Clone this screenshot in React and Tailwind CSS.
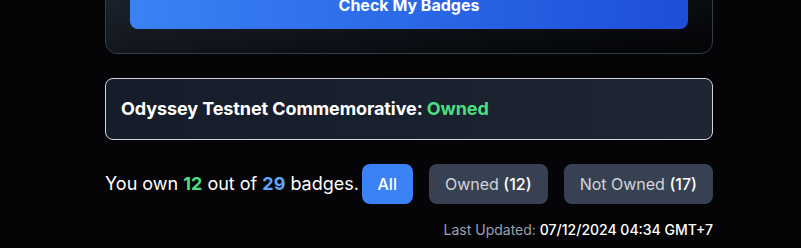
export default function App() {
  return (
    <div className="min-h-screen overflow-hidden bg-[#050507] font-['Inter','Liberation_Sans',sans-serif] text-white">
      <div className="ml-[105px] w-[608px] -mt-[44px]">
        <div className="rounded-xl border border-[#363c4a] bg-gradient-to-br from-[#232b38] via-[#12161e] to-[#030405] p-6">
          <button className="w-full rounded-lg bg-gradient-to-r from-[#3b82f6] to-[#1d4ed8] py-3 text-base font-bold text-white">
            Check My Badges
          </button>
        </div>

        <div className="mt-6 rounded-lg border border-[#d1d5db] bg-gradient-to-r from-[#161c29] to-[#1e2533] py-4 pl-[15px] pr-4">
          <p className="text-lg font-bold tracking-[-0.005em]">
            Odyssey Testnet Commemorative: <span className="text-[#4ade80]">Owned</span>
          </p>
        </div>

        <div className="mt-6 flex items-center justify-between">
          <p className="text-lg">
            You own <span className="font-bold text-[#4ade80]">12</span> out of{' '}
            <span className="font-bold text-[#60a5fa]">29</span> badges.
          </p>
          <div className="flex gap-4">
            <button className="rounded-lg bg-[#3b82f6] px-4 py-2 text-base font-medium text-white">All</button>
            <button className="rounded-lg bg-[#374151] px-4 py-2 text-base text-gray-300">
              Owned <span className="font-medium text-white">(12)</span>
            </button>
            <button className="rounded-lg bg-[#374151] px-4 py-2 text-base text-gray-300">
              Not Owned <span className="font-medium text-white">(17)</span>
            </button>
          </div>
        </div>

        <p className="mt-4 text-right text-sm text-gray-400">
          Last Updated: <span className="font-medium text-white">07/12/2024 04:34 GMT+7</span>
        </p>
      </div>
    </div>
  )
}
